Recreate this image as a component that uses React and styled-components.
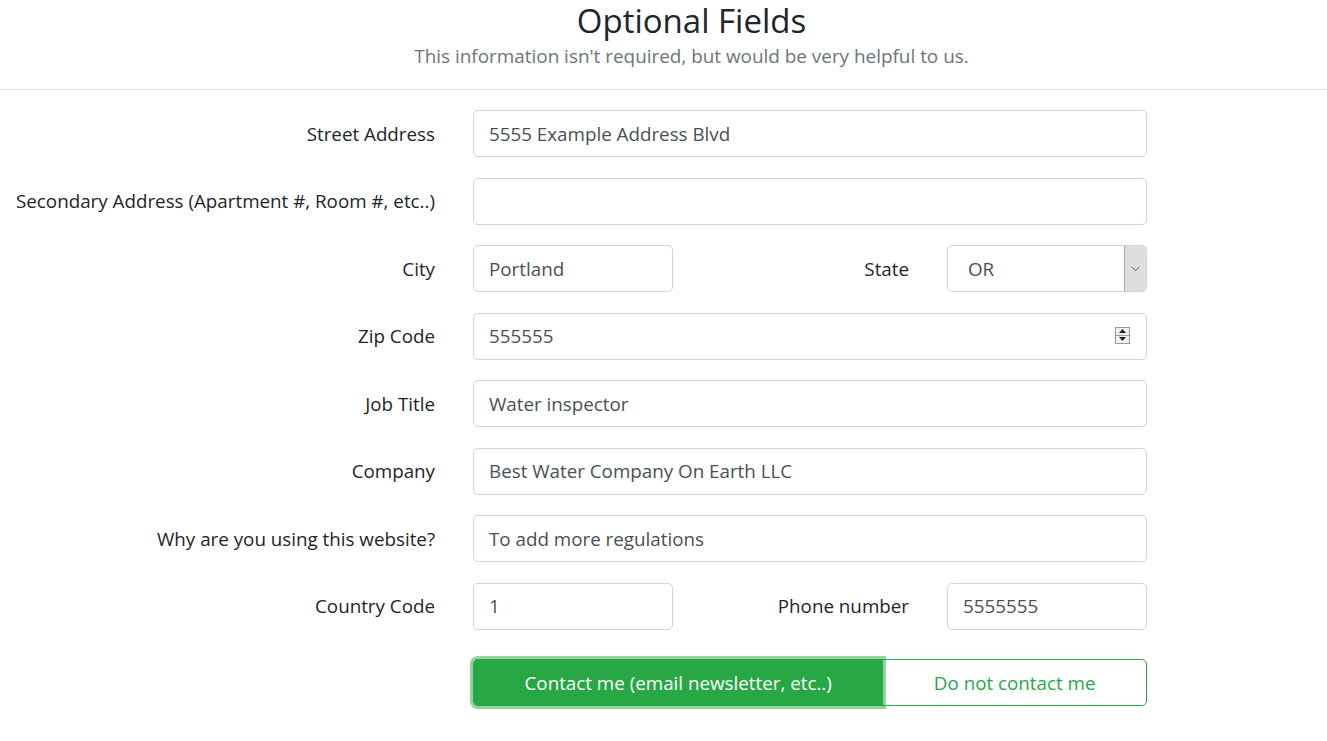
import React from 'react'
import styled, { createGlobalStyle } from 'styled-components'

const GlobalStyle = createGlobalStyle`
    body {
        margin: 0;
        background: #fff;
        font-family: "Open Sans", "Noto Sans", sans-serif;
        color: #212529;
    }
`

const Page = styled.div`
    width: 1327px;
    height: 741px;
    overflow: hidden;
`

const Header = styled.header`
    text-align: center;
    padding-left: 56px;
`

const Title = styled.h1`
    margin: 0;
    font-size: 33px;
    font-weight: 400;
    line-height: 42px;
    color: #212529;
`

const Subtitle = styled.p`
    margin: 0;
    font-size: 18.9px;
    line-height: 28px;
    color: #6c757d;
`

const Divider = styled.hr`
    margin: 19px 0 0;
    border: 0;
    border-top: 1px solid #e2e2e2;
`

const Form = styled.form`
    display: grid;
    grid-template-columns: 435px 674px;
    column-gap: 38px;
    row-gap: 20.5px;
    padding-top: 20px;
`

const Label = styled.label`
    align-self: center;
    text-align: right;
    font-size: 18.8px;
    color: #212529;
    white-space: nowrap;
`

const Split = styled.div`
    display: grid;
    grid-template-columns: 200px 1fr 200px;
    column-gap: 38px;
`

const Input = styled.input`
    box-sizing: border-box;
    width: 100%;
    height: 47px;
    padding: 0 15px;
    border: 1px solid #ced4da;
    border-radius: 5px;
    font-family: inherit;
    font-size: 18.8px;
    color: #495057;
    background: #fff;
    outline: none;
`

const SpinWrap = styled.div`
    position: relative;
`

const Spinner = styled.div`
    position: absolute;
    right: 17px;
    top: 14px;
    width: 15px;
    height: 17px;
    display: flex;
    flex-direction: column;
    border: 1px solid #9a9a9a;
    box-sizing: border-box;
    background: #f0f0f0;
`

const SpinHalf = styled.div`
    flex: 1;
    display: flex;
    align-items: center;
    justify-content: center;
    border-top: ${p => (p.$bottom ? '1px solid #9a9a9a' : 'none')};
`

const Select = styled.div`
    box-sizing: border-box;
    height: 47px;
    display: flex;
    border: 1px solid #ced4da;
    border-radius: 5px;
    overflow: hidden;
    background: #fff;
`

const SelectValue = styled.div`
    flex: 1;
    display: flex;
    align-items: center;
    padding-left: 20px;
    font-size: 18.8px;
    color: #495057;
`

const SelectArrow = styled.div`
    width: 21px;
    display: flex;
    align-items: center;
    justify-content: center;
    background: #dddddd;
    border-left: 1px solid #a8a8a8;
`

const ButtonGroup = styled.div`
    display: flex;
    height: 47px;
    margin-top: 9px;
`

const Button = styled.button`
    flex: 1 1 auto;
    padding: 0;
    font-family: inherit;
    font-size: 18.8px;
    cursor: pointer;
    border: 1px solid #28a745;
    color: ${p => (p.$filled ? '#fff' : '#28a745')};
    background: ${p => (p.$filled ? '#28a745' : '#fff')};
    border-radius: ${p => (p.$filled ? '5px 0 0 5px' : '0 5px 5px 0')};
    box-shadow: ${p => (p.$filled ? '0 0 0 3px rgba(40, 167, 69, 0.5)' : 'none')};
    position: ${p => (p.$filled ? 'relative' : 'static')};
    z-index: ${p => (p.$filled ? 1 : 0)};
    margin-left: ${p => (p.$filled ? '0' : '-1px')};
`

const Row = ({ label, value }) => (
    <>
        <Label>{label}</Label>
        <Input defaultValue={value} />
    </>
)

const App = () => (
    <Page>
        <GlobalStyle />
        <Header>
            <Title>Optional Fields</Title>
            <Subtitle>This information isn't required, but would be very helpful to us.</Subtitle>
        </Header>
        <Divider />
        <Form onSubmit={e => e.preventDefault()}>
            <Row label="Street Address" value="5555 Example Address Blvd" />
            <Row label="Secondary Address (Apartment #, Room #, etc..)" value="" />

            <Label>City</Label>
            <Split>
                <Input defaultValue="Portland" />
                <Label>State</Label>
                <Select>
                    <SelectValue>OR</SelectValue>
                    <SelectArrow>
                        <svg width="9" height="6" viewBox="0 0 9 6">
                            <path d="M0.5 0.8 L4.5 4.8 L8.5 0.8" fill="none" stroke="#666" strokeWidth="1" />
                        </svg>
                    </SelectArrow>
                </Select>
            </Split>

            <Label>Zip Code</Label>
            <SpinWrap>
                <Input defaultValue="555555" />
                <Spinner>
                    <SpinHalf>
                        <svg width="7" height="4" viewBox="0 0 7 4"><path d="M0 4 L3.5 0 L7 4 Z" fill="#222" /></svg>
                    </SpinHalf>
                    <SpinHalf $bottom>
                        <svg width="7" height="4" viewBox="0 0 7 4"><path d="M0 0 L3.5 4 L7 0 Z" fill="#222" /></svg>
                    </SpinHalf>
                </Spinner>
            </SpinWrap>

            <Row label="Job Title" value="Water inspector" />
            <Row label="Company" value="Best Water Company On Earth LLC" />
            <Row label="Why are you using this website?" value="To add more regulations" />

            <Label>Country Code</Label>
            <Split>
                <Input defaultValue="1" />
                <Label>Phone number</Label>
                <Input defaultValue="5555555" />
            </Split>

            <div />
            <ButtonGroup>
                <Button type="button" $filled>Contact me (email newsletter, etc..)</Button>
                <Button type="button">Do not contact me</Button>
            </ButtonGroup>
        </Form>
    </Page>
)

export default App
